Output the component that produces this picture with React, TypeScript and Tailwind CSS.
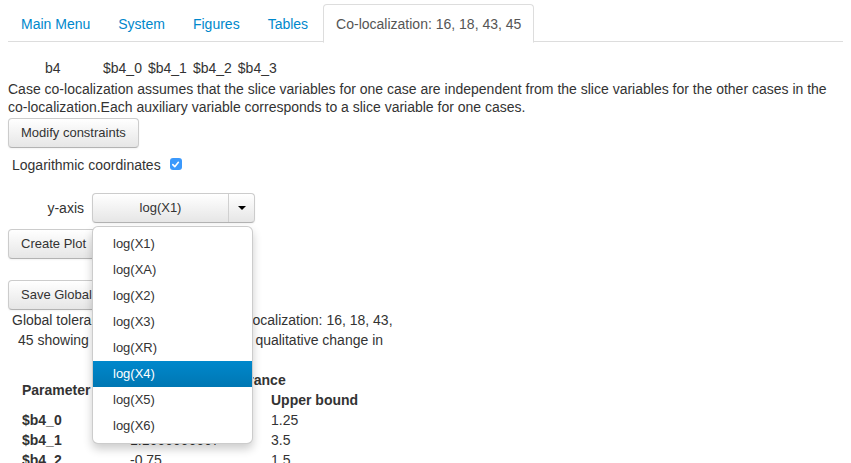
import React from "react";

const btn =
  "h-[30px] px-3 rounded-[4px] border border-[#cccccc] border-b-[#b3b3b3] bg-linear-to-b from-white to-[#e6e6e6] text-[#333] text-[13px] leading-[20px] shadow-[inset_0_1px_0_rgba(255,255,255,0.2),0_1px_2px_rgba(0,0,0,0.05)]";

const options = ["log(X1)", "log(XA)", "log(X2)", "log(X3)", "log(XR)", "log(X4)", "log(X5)", "log(X6)"];

export default function App() {
  return (
    <div
      className="w-[851px] h-[463px] overflow-hidden bg-white text-[#333] text-[14px] leading-[20px] px-2 pt-1"
      style={{ fontFamily: '"Liberation Sans", Arial, Helvetica, sans-serif' }}
    >
      {/* Tabs */}
      <div className="flex border-b border-[#dddddd] h-[38px]">
        {["Main Menu", "System", "Figures", "Tables"].map((t) => (
          <div key={t} className="mr-[2px] px-3 pt-[9px] pb-[8px] border border-transparent text-[#0088cc] leading-[20px]">
            {t}
          </div>
        ))}
        <div className="px-3 pt-[9px] pb-[8px] border border-[#dddddd] border-b-white rounded-t-[4px] bg-white text-[#555] leading-[20px] h-[39px]">
          Co-localization: 16, 18, 43, 45
        </div>
      </div>

      {/* b4 row */}
      <div className="flex mt-[16px] pl-[37px] leading-[20px]">
        <span className="w-[58px]">b4</span>
        <div className="flex gap-[6px]">
          <span>$b4_0</span>
          <span>$b4_1</span>
          <span>$b4_2</span>
          <span>$b4_3</span>
        </div>
      </div>

      <p className="leading-[18px] mt-[2px]">
        Case co-localization assumes that the slice variables for one case are independent from the slice variables for the other cases in the co-localization.Each auxiliary variable corresponds to a slice variable for one cases.
      </p>

      <button className={`${btn} mt-[2px]`}>Modify constraints</button>

      <div className="flex items-start mt-[7px] pl-1 h-[20px]">
        <span>Logarithmic coordinates</span>
        <span className="ml-[9px] mt-[3px] w-[12px] h-[12px] rounded-[3px] bg-[#3b99fc] flex items-center justify-center">
          <svg width="9" height="9" viewBox="0 0 10 10">
            <path d="M2 5.2 L4.2 7.4 L8.2 2.6" fill="none" stroke="white" strokeWidth="1.8" strokeLinecap="round" strokeLinejoin="round" />
          </svg>
        </span>
      </div>

      {/* y-axis select */}
      <div className="flex items-center mt-[18px] h-[30px]">
        <span className="w-[84px] text-right pr-[8px] pl-[39px] -mt-[1px]">y-axis</span>
        <div className="relative">
          <div className="flex w-[163px] h-[30px] rounded-[4px] border border-[#cccccc] border-b-[#b3b3b3] bg-linear-to-b from-white to-[#e6e6e6] text-[13px] shadow-[inset_0_1px_0_rgba(255,255,255,0.2),0_1px_2px_rgba(0,0,0,0.05)]">
            <div className="flex-1 flex items-center justify-center">log(X1)</div>
            <div className="w-[26px] border-l border-[#d0d0d0] flex items-center justify-center">
              <span className="w-0 h-0 border-l-[4px] border-r-[4px] border-t-[4px] border-l-transparent border-r-transparent border-t-black" />
            </div>
          </div>
          <div className="absolute left-0 top-[33px] z-10 w-[161px] py-1 bg-white border border-[rgba(0,0,0,0.2)] rounded-[6px] shadow-[0_5px_10px_rgba(0,0,0,0.2)] text-[13px]">
            {options.map((o) => (
              <div
                key={o}
                className={
                  o === "log(X4)"
                    ? "h-[26px] px-5 py-[3px] leading-[20px] text-white bg-linear-to-b from-[#0088cc] to-[#0077b3]"
                    : "h-[26px] px-5 py-[3px] leading-[20px] text-[#333]"
                }
              >
                {o}
              </div>
            ))}
          </div>
        </div>
      </div>

      <div className="mt-[6px]">
        <button className={btn}>Create Plot</button>
      </div>
      <div className="mt-[21px]">
        <button className={btn}>Save Global Tolerances</button>
      </div>

      <div className="leading-[20px] whitespace-nowrap">
        <div className="pl-[4px]">Global tolerances for case studies Co-localization: 16, 18, 43,</div>
        <div className="pl-[10px]">45 showing the allowed range with no qualitative change in</div>
      </div>

      {/* table */}
      <div className="mt-[20px] grid grid-cols-[108px_141px_120px] pl-[14px] leading-[20px]">
        <div className="row-span-2 font-bold flex items-center">Parameter</div>
        <div className="col-span-2 font-bold pl-[46px]">Global tolerance</div>
        <div className="font-bold">Lower bound</div>
        <div className="font-bold">Upper bound</div>
        <div className="font-bold">$b4_0</div>
        <div>-0.25</div>
        <div>1.25</div>
        <div className="font-bold">$b4_1</div>
        <div>1.1666666667</div>
        <div>3.5</div>
        <div className="font-bold">$b4_2</div>
        <div>-0.75</div>
        <div>1.5</div>
      </div>
    </div>
  );
}
